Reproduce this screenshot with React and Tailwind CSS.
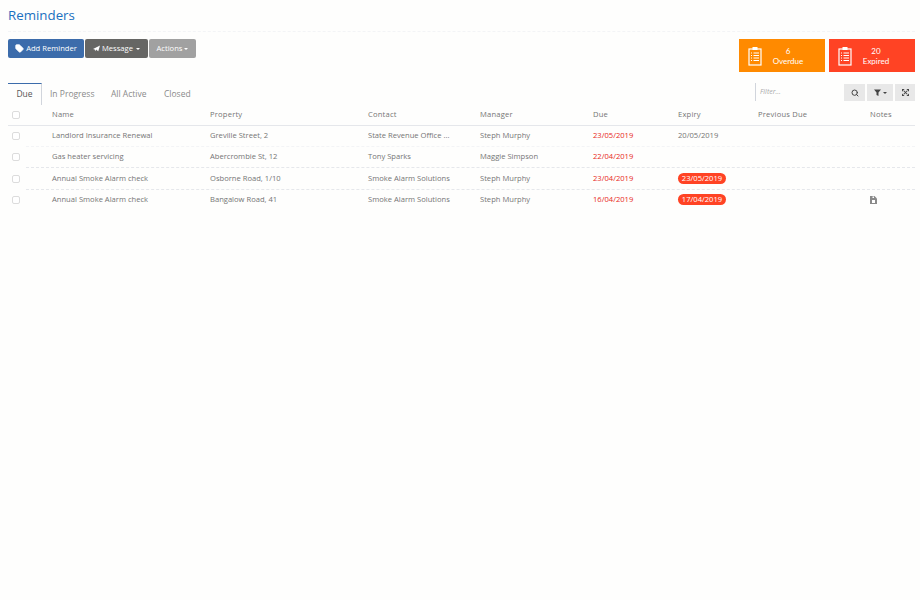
import { Tag, Search } from "lucide-react"

const rows = [
  { name: "Landlord Insurance Renewal", property: "Greville Street, 2", contact: "State Revenue Office ...", manager: "Steph Murphy", due: "23/05/2019", expiry: "20/05/2019", line: "border-gray-100" },
  { name: "Gas heater servicing", property: "Abercrombie St, 12", contact: "Tony Sparks", manager: "Maggie Simpson", due: "22/04/2019", line: "border-gray-200" },
  { name: "Annual Smoke Alarm check", property: "Osborne Road, 1/10", contact: "Smoke Alarm Solutions", manager: "Steph Murphy", due: "23/04/2019", expiry: "23/05/2019", expired: true, line: "border-gray-200", tall: true },
  { name: "Annual Smoke Alarm check", property: "Bangalow Road, 41", contact: "Smoke Alarm Solutions", manager: "Steph Murphy", due: "16/04/2019", expiry: "17/04/2019", expired: true, note: true },
]

// first column is 18px shorter on the rows, the dashes start after the checkbox
const headCols = "grid grid-cols-[44px_158px_158px_112px_113px_85px_80px_112px_1fr] items-center"
const rowCols = "grid grid-cols-[26px_158px_158px_112px_113px_85px_80px_112px_1fr] items-center"

function Box() {
  return <span className="block w-[8px] h-[8px] rounded-[2px] border border-[#dcdcdc] bg-white" />
}

function Clipboard() {
  return (
    <svg width="14" height="20" viewBox="0 0 14 20" className="ml-[9px] shrink-0" fill="none" stroke="white">
      <rect x="1" y="3" width="12" height="16" strokeWidth="1.2" />
      <rect x="4.5" y="1" width="5" height="3" fill="white" stroke="none" />
      <path d="M3 7h1M3 9.5h1M3 12h1M3 14.5h1M5.5 7h5.5M5.5 9.5h5.5M5.5 12h5.5M5.5 14.5h5.5" strokeWidth="1" />
    </svg>
  )
}

function Tile({ color, count, label, shift }) {
  return (
    <div className={`w-[86px] h-[33px] flex items-center text-white ${color}`}>
      <Clipboard />
      <div className={`flex-1 text-center text-[8px] leading-[10px] font-['Lato',sans-serif] ${shift}`}>
        <div>{count}</div>
        <div>{label}</div>
      </div>
    </div>
  )
}

function Caret({ className }) {
  return <span className={`border-x-[2px] border-t-[2px] border-x-transparent ${className}`} />
}

export default function App() {
  return (
    <div className="min-h-[600px] bg-[#fefefd] pl-[8px] pr-[5px] text-[#757575] text-[7.6px] font-['Open_Sans',sans-serif]">
      <div className="h-[32px] border-b border-dashed border-gray-100 pt-[6px]">
        <h1 className="text-[13.3px] leading-[18px] text-[#1a70c0]">Reminders</h1>
      </div>

      <div className="flex justify-between pt-[7px] h-[51px]">
        <div className="flex gap-[1px] h-[19px] text-white">
          <button className="w-[76px] rounded-[2px] bg-[#3c6cab] flex items-center justify-center gap-[2px]">
            <Tag size={9} fill="white" /> Add Reminder
          </button>
          <button className="w-[63px] rounded-[2px] bg-[#666664] flex items-center justify-center gap-[2px]">
            <svg width="7" height="7" viewBox="0 0 8 8" fill="white"><path d="M0 4.5 8 .5 6 7 3.5 5 2.5 7 2 5z" /></svg>
            Message
            <Caret className="ml-[1px] border-t-white" />
          </button>
          <button className="w-[47px] rounded-[2px] bg-[#a1a1a1] flex items-center justify-center gap-[2px]">
            Actions
            <Caret className="border-t-white" />
          </button>
        </div>
        <div className="flex gap-[4px]">
          <Tile color="bg-[#ff8a00]" count="6" label="Overdue" shift="pr-[11px]" />
          <Tile color="bg-[#ff4324]" count="20" label="Expired" shift="pr-[15px]" />
        </div>
      </div>

      <div className="flex h-[22px]">
        <div className="flex text-[8.5px] text-[#8a8a8a] whitespace-nowrap">
          <div className="w-[34px] border-t border-t-[#3c6cab] border-r border-r-gray-300 text-[#555] flex items-center justify-center">Due</div>
          <div className="ml-[8px] w-[44px] flex items-center">In Progress</div>
          <div className="ml-[17px] w-[36px] flex items-center">All Active</div>
          <div className="ml-[17px] flex items-center">Closed</div>
        </div>
        <div className="ml-auto flex h-[18px] w-[160px]">
          <div className="w-[89px] border-l border-gray-300 pl-[4px] flex items-center text-[7px] italic text-[#aaa]">Filter...</div>
          <div className="flex gap-[2px] pt-[1px] text-[#444]">
            <span className="w-[21px] bg-[#e8e8e8] flex items-center justify-center"><Search size={8} strokeWidth={3} /></span>
            <span className="w-[26px] bg-[#e8e8e8] flex items-center justify-center gap-[2px]">
              <svg width="7" height="7" viewBox="0 0 7 7" fill="#444"><path d="M0 .5h7L4.5 3.5V7l-2-1V3.5z" /></svg>
              <Caret className="border-t-[#444]" />
            </span>
            <span className="w-[20px] bg-[#e8e8e8] flex items-center justify-center">
              <svg width="7" height="7" viewBox="0 0 8 8" fill="#444" stroke="#444">
                <path d="M2 2l4 4M6 2 2 6" strokeWidth="1.2" />
                <path d="M0 0h3L0 3zM8 0v3L5 0zM0 8V5l3 3zM8 8H5l3-3z" stroke="none" />
              </svg>
            </span>
          </div>
        </div>
      </div>

      <div className={`${headCols} h-[21px] pb-[1px] border-b border-gray-200 tracking-[0.2px]`}>
        <span className="pl-[4px]"><Box /></span>
        <span>Name</span>
        <span>Property</span>
        <span>Contact</span>
        <span>Manager</span>
        <span>Due</span>
        <span>Expiry</span>
        <span>Previous Due</span>
        <span>Notes</span>
      </div>

      {rows.map((r, i) => (
        <div key={i} className={`${rowCols} ml-[18px] ${r.tall ? "h-[22px]" : "h-[21px] pb-[1px]"} ${r.line ? `border-b border-dashed ${r.line}` : ""}`}>
          <span className="-ml-[14px]"><Box /></span>
          <span>{r.name}</span>
          <span>{r.property}</span>
          <span>{r.contact}</span>
          <span>{r.manager}</span>
          <span className="text-[#e8291c]">{r.due}</span>
          <span>
            {r.expired
              ? <span className="inline-block w-[48px] h-[11px] rounded-full bg-[#ff4324] text-white text-center leading-[11px]">{r.expiry}</span>
              : r.expiry}
          </span>
          <span />
          <span>
            {r.note && (
              <svg width="7" height="8" viewBox="0 0 7 8" fill="#8a8a8a" className="block">
                <path d="M0 0h4.5L7 2.5V8H0z" />
                <rect x="2" y="4" width="3" height="3" fill="white" />
                <rect x="2.5" y="0.5" width="1.5" height="1.5" fill="white" />
              </svg>
            )}
          </span>
        </div>
      ))}
    </div>
  )
}
